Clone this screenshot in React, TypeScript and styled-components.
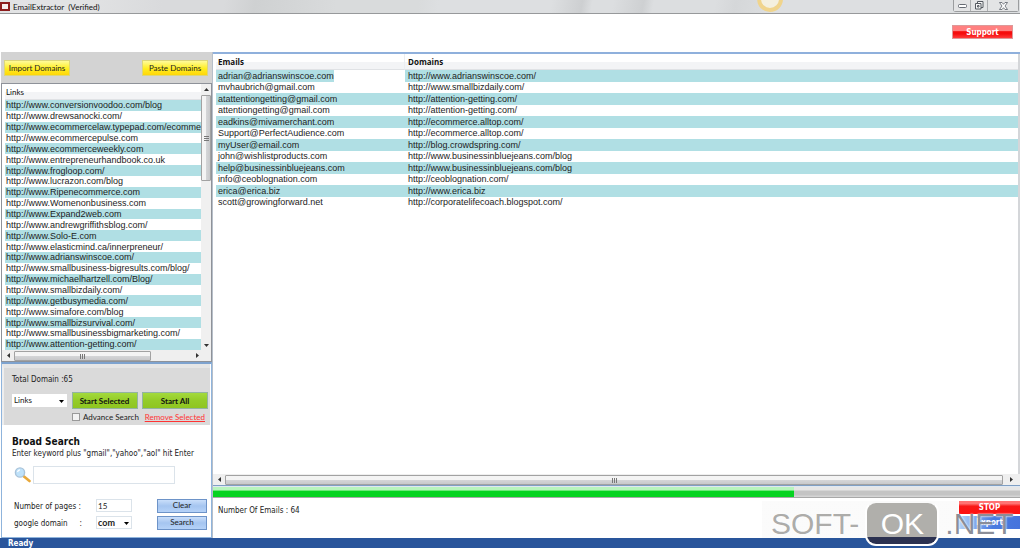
import React from "react";
import styled, { createGlobalStyle } from "styled-components";

const links = [
  "http://www.conversionvoodoo.com/blog",
  "http://www.drewsanocki.com/",
  "http://www.ecommercelaw.typepad.com/ecommerce",
  "http://www.ecommercepulse.com",
  "http://www.ecommerceweekly.com",
  "http://www.entrepreneurhandbook.co.uk",
  "http://www.frogloop.com/",
  "http://www.lucrazon.com/blog",
  "http://www.Ripenecommerce.com",
  "http://www.Womenonbusiness.com",
  "http://www.Expand2web.com",
  "http://www.andrewgriffithsblog.com/",
  "http://www.Solo-E.com",
  "http://www.elasticmind.ca/innerpreneur/",
  "http://www.adrianswinscoe.com/",
  "http://www.smallbusiness-bigresults.com/blog/",
  "http://www.michaelhartzell.com/Blog/",
  "http://www.smallbizdaily.com/",
  "http://www.getbusymedia.com/",
  "http://www.simafore.com/blog",
  "http://www.smallbizsurvival.com/",
  "http://www.smallbusinessbigmarketing.com/",
  "http://www.attention-getting.com/",
];

const emails: [string, string][] = [
  ["adrian@adrianswinscoe.com", "http://www.adrianswinscoe.com/"],
  ["mvhaubrich@gmail.com", "http://www.smallbizdaily.com/"],
  ["atattentiongetting@gmail.com", "http://attention-getting.com/"],
  ["attentiongetting@gmail.com", "http://attention-getting.com/"],
  ["eadkins@mivamerchant.com", "http://ecommerce.alltop.com/"],
  ["Support@PerfectAudience.com", "http://ecommerce.alltop.com/"],
  ["myUser@email.com", "http://blog.crowdspring.com/"],
  ["john@wishlistproducts.com", "http://www.businessinbluejeans.com/blog"],
  ["help@businessinbluejeans.com", "http://www.businessinbluejeans.com/blog"],
  ["info@ceoblognation.com", "http://ceoblognation.com/"],
  ["erica@erica.biz", "http://www.erica.biz"],
  ["scott@growingforward.net", "http://corporatelifecoach.blogspot.com/"],
];

const GlobalStyle = createGlobalStyle`
  *, *::before, *::after { box-sizing: border-box; }
  body { margin: 0; background: #fff; }
  button, input, select { font: inherit; color: inherit; margin: 0; border-radius: 0; }
`;

const tahoma = `"DejaVu Sans Condensed", "DejaVu Sans", sans-serif`;
const segoe = `Lato, "Open Sans", sans-serif`;
const arial = `"Liberation Sans", Arial, sans-serif`;

const Page = styled.div`
  position: relative;
  min-height: 100vh;
  display: flex;
  flex-direction: column;
  font: 8px/10px ${tahoma};
  color: #222;
  overflow: hidden;
`;

const TitleBar = styled.header`
  position: relative;
  display: flex;
  align-items: center;
  gap: 3px;
  height: 14px;
  border-bottom: 1px solid #97999b;
  background: linear-gradient(100deg, #e2e3e4 0 8%, #d9dadc 16% 22%, #cfd1d2 25%, #d9dbdc 33% 41%, #dddfe1 43% 54%, #cdcfd1 57%, #dcdee0 58% 60%, #ced0d2 63%, #dcdee0 64% 70%, #d5d7d9 72%, #dddfe1 76%);
`;

const AppIcon = styled.span`
  width: 10px;
  height: 9px;
  border: 2px solid #8c1d1d;
  background: #f5eeee;
`;

const Title = styled.h1`
  margin: 0;
  font: 8px/12px ${segoe};
  color: #111;
`;

const Glow = styled.span`
  position: absolute;
  left: 76%;
  margin-left: -18px;
  top: -14px;
  width: 26px;
  height: 26px;
  border-radius: 50%;
  border: 4px solid #f0d48c;
  background: #f4f0df;
  clip-path: inset(14px 0 0 0);
`;

const WindowButtons = styled.div`
  display: flex;
  align-self: flex-start;
  margin: 0 1px 0 auto;
  border: 1px solid #9b9d9f;
  border-top: 0;
  border-radius: 0 0 3px 3px;
`;

const WindowButton = styled.button<{ $wide?: boolean }>`
  display: grid;
  place-items: center;
  width: ${(p) => (p.$wide ? 30 : 17)}px;
  height: 11px;
  padding: 0;
  border: 0;
  border-right: ${(p) => (p.$wide ? 0 : 1)}px solid #adafb1;
  background: #e3e4e5;
`;

const Banner = styled.div`
  display: flex;
  justify-content: flex-end;
  padding: 11px 7px 13px;
`;

const RedButton = styled.button`
  width: 61px;
  height: 14px;
  padding: 0;
  border: 1px solid #d99;
  background: linear-gradient(#ff8080 0 45%, #f50d0d 46% 65%, #ff3b3b);
  color: #fff;
  font: bold 8px/11px ${tahoma};
`;

const Main = styled.main`
  flex: 1;
  display: grid;
  grid-template-columns: 213px minmax(0, 1fr);
`;

const Sidebar = styled.aside`
  display: flex;
  flex-direction: column;
  padding-left: 1px;
  border-right: 1px solid #b7bfc9;
`;

const Toolbar = styled.div`
  display: flex;
  justify-content: space-between;
  align-items: center;
  height: 31px;
  padding: 1px 4px 0 3px;
  background: #d3d3d3;
`;

const YellowButton = styled.button`
  height: 16px;
  padding: 0;
  width: 66px;
  border: 1px solid #dcd67a;
  background: linear-gradient(#fffb9a, #ffee20 55%, #ffd60a);
  font: 8px/12px ${segoe};
  white-space: nowrap;
`;

const ListBox = styled.div`
  display: grid;
  grid-template-columns: minmax(0, 1fr) 10px;
  border: 1px solid #8e9299;
`;

const ListBody = styled.div`
  padding-left: 3px;
  overflow: hidden;
`;

const HeadCell = styled.th<{ $bold?: boolean; $indent: number }>`
  height: 16px;
  padding: 0 0 0 ${(p) => p.$indent}px;
  text-align: left;
  font: ${(p) => (p.$bold ? "bold " : "")}8px/12px ${(p) => (p.$bold ? `"Open Sans", sans-serif` : segoe)};
  color: #111;
  background: linear-gradient(#fff 0 50%, #f3f4f6 51%);
  border-bottom: 1px solid #e0e2e5;
  &:not(:last-child) { border-right: 1px solid #eceef1; }
`;

const Table = styled.table<{ $height: number }>`
  width: 100%;
  height: ${(p) => p.$height}px;
  border-collapse: separate;
  border-spacing: 0;
  table-layout: fixed;
  font: 9px/10px ${arial};
  color: #1c1c1c;
`;

const Row = styled.tr<{ $odd: boolean }>`
  background: ${(p) => (p.$odd ? "#b0dfe4" : "#fff")};
`;

const Cell = styled.td<{ $indent: number; $short?: boolean }>`
  padding: 0 0 0 ${(p) => p.$indent}px;
  white-space: nowrap;
  ${(p) => p.$short && "background: linear-gradient(90deg, #b0dfe4 0 118px, #fff 118px);"}
`;

const VScroll = styled.div`
  display: grid;
  grid-template-rows: 11px 86px 1fr 10px;
  background: #f0f0f0;
`;

const HScroll = styled.div<{ $wide?: boolean }>`
  grid-column: 1 / -1;
  display: grid;
  grid-template-columns: ${(p) => (p.$wide ? "12px minmax(0, 1fr) 17px" : "12px 137px minmax(0, 1fr)")};
  height: 11px;
  background: #efefef;
`;

const Thumb = styled.span<{ $vertical?: boolean }>`
  display: grid;
  place-items: center;
  margin: ${(p) => (p.$vertical ? "0" : "1px 0 0")};
  border: 1px solid #a2a2a2;
  border-radius: 1px;
  background: linear-gradient(${(p) => (p.$vertical ? "90deg" : "180deg")}, #f4f4f4 0 45%, #d4d5d7 55%, #c8c9cb);
`;

const ArrowBox = styled.span<{ $inset?: boolean }>`
  display: grid;
  place-items: center;
  ${(p) => p.$inset && "justify-self: end; margin-right: 12px;"}
`;

const Controls = styled.section`
  flex: 1;
  display: flex;
  flex-direction: column;
  border: 1px solid #8fb4dc;
  border-top: 2px solid #7ea3cf;
`;

const Domains = styled.div`
  margin-right: 1px;
  padding: 7px 2px 0 8px;
  border-top: 4px solid #e6e6e6;
  border-left: 2px solid #eee;
  background: #dadada;
`;

const Total = styled.p`
  margin: 0 0 7px;
`;

const ButtonRow = styled.div`
  display: grid;
  grid-template-columns: 55px 66px 66px;
  justify-content: space-between;
  align-items: center;
`;

const OptionRow = styled.div`
  display: flex;
  align-items: center;
  justify-content: space-between;
  height: 16px;
  padding: 0 3px 0 60px;
`;

const SelectWrap = styled.span<{ $w: number }>`
  position: relative;
  display: block;
  width: ${(p) => p.$w}px;
  & > svg {
    position: absolute;
    right: 3px;
    top: 50%;
    margin-top: -1px;
    pointer-events: none;
  }
`;

const Select = styled.select<{ $bold?: boolean }>`
  display: block;
  width: 100%;
  height: 13px;
  padding: 0 0 0 1px;
  appearance: none;
  border: 1px solid ${(p) => (p.$bold ? "#dbe3ea" : "#fff")};
  background: #fff;
  font: ${(p) => (p.$bold ? "bold 9px" : "8px")}/11px ${segoe};
`;

const GreenButton = styled.button`
  height: 17px;
  padding: 0;
  border: 1px solid #93b4a0;
  background: linear-gradient(#a3da3c, #94cc28 50%, #8fc520);
  font: bold 8px/14px ${segoe};
  color: #111;
  white-space: nowrap;
`;

const CheckLabel = styled.label`
  display: flex;
  align-items: center;
  gap: 3px;
  font: 8px/12px ${segoe};
  white-space: nowrap;
`;

const Check = styled.input`
  appearance: none;
  width: 8px;
  height: 8px;
  border: 1px solid #999;
  background: #f2f2f2;
`;

const RemoveLink = styled.a`
  font: 8px/10px ${segoe};
  color: #f33;
  text-decoration: underline;
  white-space: nowrap;
`;

const Search = styled.form`
  display: flex;
  flex-direction: column;
  padding: 10px 4px 5px 10px;
`;

const SearchTitle = styled.h2`
  margin: 0;
  font: bold 10px/13px ${tahoma};
  color: #111;
`;

const Hint = styled.label`
  line-height: 12px;
  white-space: nowrap;
`;

const KeywordRow = styled.div`
  display: flex;
  align-items: center;
  gap: 2px;
  margin: 6px 0 13px;
  padding-left: 2px;
`;

const Field = styled.input<{ $w: number; $h: number }>`
  width: ${(p) => p.$w}px;
  height: ${(p) => p.$h}px;
  padding: 0 1px;
  border: 1px solid #dbe3ea;
  background: #fff;
  font: 8px/10px ${segoe};
`;

const FormGrid = styled.div`
  display: grid;
  grid-template-columns: 82px minmax(0, 1fr) 50px;
  grid-auto-rows: 17px;
  align-items: center;
  padding-left: 2px;
`;

const FormLabel = styled.label`
  display: flex;
  justify-content: space-between;
  padding: 3px 14px 0 0;
  white-space: nowrap;
`;

const BlueButton = styled.button`
  height: 14px;
  padding: 0;
  border: 1px solid #6d93c8;
  background: linear-gradient(#c9defa, #a5c5f0 50%, #b5d2f8);
  font: 8px/11px ${segoe};
`;

const Results = styled.section`
  display: flex;
  flex-direction: column;
  border-top: 2px solid #8fb0dc;
`;

const ResultsBody = styled.div`
  flex: 1;
  padding-left: 3px;
  border-right: 2px solid #d4d6d9;
`;

const Progress = styled.div`
  height: 11px;
  background: linear-gradient(#e6e6e6 0 25%, #c4c4c4 45% 75%, #d8d8d8);
  border-bottom: 1px solid #a8a8a8;
`;

const ProgressFill = styled.div`
  height: 100%;
  background: linear-gradient(#b8f5bd 0 25%, #6ce878 35%, #06d321 45%);
`;

const Rule = styled.div`
  height: 2px;
  background: #7f9fc4;
  border-bottom: 1px solid #dfe8f2;
`;

const Footer = styled.div`
  display: flex;
  justify-content: space-between;
  height: 40px;
  padding: 3px 0 0 5px;
`;

const Count = styled.p`
  margin: 5px 0 0;
`;

const Actions = styled.div`
  display: flex;
  flex-direction: column;
  gap: 2px;
`;

const StopButton = styled(RedButton)`
  height: 13px;
  border: 0;
  background: linear-gradient(#ff7373 0 20%, #f81818 40%, #ff1010);
`;

const ExportButton = styled(RedButton)`
  height: 13px;
  border: 0;
  background: linear-gradient(90deg, #b5d3f7, #4a7be0 55%, #4673dc);
`;

const StatusBar = styled.footer`
  height: 10px;
  padding-left: 8px;
  background: #29559b;
  color: #fff;
  font: bold 8px/12px ${tahoma};
`;

const Watermark = styled.div`
  position: absolute;
  right: 0;
  bottom: 2px;
  display: flex;
  align-items: center;
  gap: 6px;
  width: 258px;
  height: 45px;
  padding-left: 9px;
  font: 30px/44px ${arial};
  color: rgba(120, 119, 115, 0.62);
  background: linear-gradient(rgba(240, 240, 240, 0.28) 0 37px, transparent 37px) 0 0 / 196px 100% no-repeat;
  pointer-events: none;
`;

const WatermarkBadge = styled.span`
  width: 74px;
  height: 45px;
  border: 2px solid #fff;
  border-top-color: #fafafa;
  border-radius: 11px;
  background: linear-gradient(#b0afab 0 34px, #2b3150 34px);
  color: #fff;
  line-height: 41px;
  text-align: center;
`;

const WatermarkEnd = styled.span`
  color: rgba(60, 66, 82, 0.6);
  text-shadow: 0 0 2px #fff, 0 0 1px #fff;
`;

const arrows = {
  up: "M0 3L2.5 0L5 3z",
  down: "M0 0L5 0L2.5 3z",
  left: "M3 0L0 2.5L3 5z",
  right: "M0 0L3 2.5L0 5z",
};

function Arrow({ dir, color = "#333" }: { dir: keyof typeof arrows; color?: string }) {
  const tall = dir === "left" || dir === "right";
  return (
    <svg width={tall ? 3 : 5} height={tall ? 5 : 3} fill={color} aria-hidden="true">
      <path d={arrows[dir]} />
    </svg>
  );
}

function Grip({ vertical }: { vertical?: boolean }) {
  return (
    <svg width="5" height="5" stroke="#777" aria-hidden="true">
      <path d={vertical ? "M0 .5H5M0 2.5H5M0 4.5H5" : "M.5 0V5M2.5 0V5M4.5 0V5"} />
    </svg>
  );
}

export default function App() {
  return (
    <Page>
      <GlobalStyle />
      <TitleBar>
        <AppIcon />
        <Title>EmailExtractor&nbsp; (Verified)</Title>
        <Glow />
        <WindowButtons>
          <WindowButton aria-label="Minimize">
            <svg width="9" height="4"><rect x=".5" y=".5" width="8" height="3" rx="1" fill="#fff" stroke="#666b73" /></svg>
          </WindowButton>
          <WindowButton aria-label="Restore">
            <svg width="9" height="9" fill="#f7f7f7" stroke="#555a61">
              <path d="M2.5 .5H8V6.5H2.5z" />
              <path d="M.5 2.5H6V8H.5z" />
              <path d="M2.5 4.5H4V6H2.5z" />
            </svg>
          </WindowButton>
          <WindowButton $wide aria-label="Close">
            <svg width="9" height="8" fill="#fff" stroke="#5c6169" strokeWidth=".8">
              <path d="M.5 .5H3L4.5 2.3L6 .5H8.5L6 4L8.5 7.5H6L4.5 5.7L3 7.5H.5L3 4z" />
            </svg>
          </WindowButton>
        </WindowButtons>
      </TitleBar>

      <Banner>
        <RedButton>Support</RedButton>
      </Banner>

      <Main>
        <Sidebar>
          <Toolbar>
            <YellowButton>Import Domains</YellowButton>
            <YellowButton>Paste Domains</YellowButton>
          </Toolbar>
          <ListBox>
            <ListBody>
              <Table $height={266}>
                <thead>
                  <tr><HeadCell $indent={1}>Links</HeadCell></tr>
                </thead>
                <tbody>
                  {links.map((l, i) => (
                    <Row key={l} $odd={i % 2 === 0}>
                      <Cell $indent={1}>{l}</Cell>
                    </Row>
                  ))}
                </tbody>
              </Table>
            </ListBody>
            <VScroll>
              <ArrowBox><Arrow dir="up" /></ArrowBox>
              <Thumb $vertical><Grip vertical /></Thumb>
              <span />
              <ArrowBox><Arrow dir="down" /></ArrowBox>
            </VScroll>
            <HScroll>
              <ArrowBox><Arrow dir="left" /></ArrowBox>
              <Thumb><Grip /></Thumb>
              <ArrowBox $inset><Arrow dir="right" /></ArrowBox>
            </HScroll>
          </ListBox>

          <Controls>
            <Domains>
              <Total>Total Domain :65</Total>
              <ButtonRow>
                <SelectWrap $w={55}>
                  <Select aria-label="Source"><option>Links</option></Select>
                  <Arrow dir="down" color="#000" />
                </SelectWrap>
                <GreenButton>Start Selected</GreenButton>
                <GreenButton>Start All</GreenButton>
              </ButtonRow>
              <OptionRow>
                <CheckLabel>
                  <Check type="checkbox" />
                  Advance Search
                </CheckLabel>
                <RemoveLink href="#remove">Remove Selected</RemoveLink>
              </OptionRow>
            </Domains>
            <Search>
              <SearchTitle>Broad Search</SearchTitle>
              <Hint htmlFor="keyword">Enter keyword plus "gmail","yahoo","aol" hit Enter</Hint>
              <KeywordRow>
                <svg width="17" height="16" aria-hidden="true">
                  <path d="M10 9.5L15.5 14" stroke="#e8a83a" strokeWidth="2.6" strokeLinecap="round" />
                  <circle cx="6" cy="5.5" r="4.6" fill="#bfe2fa" stroke="#a9c3da" strokeWidth="1.4" />
                  <path d="M3.5 5A3 3 0 0 1 6 2.8" fill="none" stroke="#fff" strokeWidth="1.2" />
                </svg>
                <Field id="keyword" $w={142} $h={18} />
              </KeywordRow>
              <FormGrid>
                <FormLabel htmlFor="pages"><span>Number of pages :</span></FormLabel>
                <Field id="pages" defaultValue="15" $w={36} $h={13} />
                <BlueButton type="button">Clear</BlueButton>
                <FormLabel htmlFor="domain"><span>google domain</span><span>:</span></FormLabel>
                <SelectWrap $w={36}>
                  <Select id="domain" $bold><option>com</option></Select>
                  <Arrow dir="down" color="#000" />
                </SelectWrap>
                <BlueButton type="button">Search</BlueButton>
              </FormGrid>
            </Search>
          </Controls>
        </Sidebar>

        <Results>
          <ResultsBody>
            <Table $height={154}>
              <colgroup>
                <col style={{ width: 189 }} />
                <col />
              </colgroup>
              <thead>
                <tr>
                  <HeadCell $bold $indent={2}>Emails</HeadCell>
                  <HeadCell $bold $indent={3}>Domains</HeadCell>
                </tr>
              </thead>
              <tbody>
                {emails.map(([mail, domain], i) => (
                  <Row key={mail} $odd={i % 2 === 0}>
                    <Cell $indent={2} $short={i === 0}>{mail}</Cell>
                    <Cell $indent={3}>{domain}</Cell>
                  </Row>
                ))}
              </tbody>
            </Table>
          </ResultsBody>
          <HScroll $wide>
            <ArrowBox><Arrow dir="left" /></ArrowBox>
            <Thumb><Grip /></Thumb>
            <ArrowBox><Arrow dir="right" /></ArrowBox>
          </HScroll>
          <Rule />
          <Progress>
            <ProgressFill style={{ width: "72%" }} />
          </Progress>
          <Footer>
            <Count>Number Of Emails : 64</Count>
            <Actions>
              <StopButton>STOP</StopButton>
              <ExportButton>Export</ExportButton>
            </Actions>
          </Footer>
        </Results>
      </Main>

      <StatusBar>Ready</StatusBar>

      <Watermark>
        <span>SOFT-</span>
        <WatermarkBadge>OK</WatermarkBadge>
        <WatermarkEnd>.NET</WatermarkEnd>
      </Watermark>
    </Page>
  );
}
